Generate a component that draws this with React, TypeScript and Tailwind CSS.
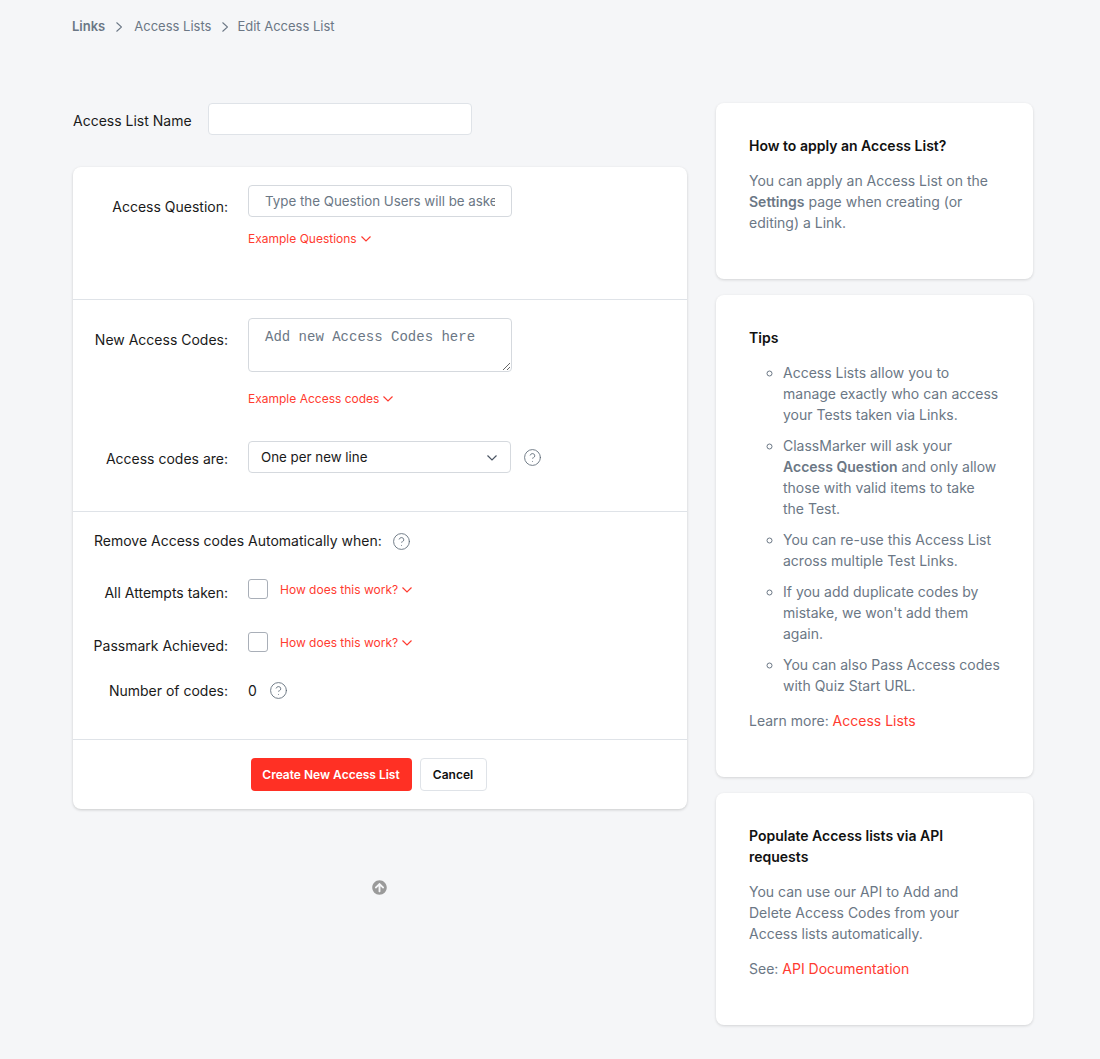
import { CircleHelp } from "lucide-react";
import { FaArrowCircleUp } from "react-icons/fa";

const font = { fontFamily: '"Inter", "Liberation Sans", sans-serif' };

function Chevron({ className }: { className: string }) {
  return (
    <svg width="10" height="6" viewBox="0 0 10 6" fill="none" stroke="currentColor" strokeWidth="1.2" className={className}>
      <path d="M0.5 0.5 L5 5 L9.5 0.5" />
    </svg>
  );
}

function Crumb({ className }: { className: string }) {
  return (
    <svg width="6" height="10" viewBox="0 0 6 10" fill="none" stroke="currentColor" strokeWidth="1.1" className={className}>
      <path d="M0.5 0.5 L5.5 5 L0.5 9.5" />
    </svg>
  );
}

function RedLink({ children }: { children: string }) {
  return (
    <a className="flex items-center gap-[4px] text-[12px] leading-4 text-[#ff3b30]">
      {children}
      <Chevron className="" />
    </a>
  );
}

function Label({ children }: { children: string }) {
  return <label className="block w-[155px] shrink-0 text-right text-[14px] leading-5 text-[#1a1a1a]">{children}</label>;
}

function Help() {
  return <CircleHelp size={19} strokeWidth={1.1} className="text-[#5f6b78]" />;
}

function SideCard({ children, className }: { children: React.ReactNode; className: string }) {
  return (
    <section className={"rounded-lg bg-white pl-[33px] pr-[30px] shadow-[0_1px_3px_rgba(0,0,0,0.14)] text-[14px] leading-[21px] text-[#6b7785] " + className}>
      {children}
    </section>
  );
}

export default function App() {
  return (
    <div style={font} className="min-h-[1059px] bg-[#f5f6f8] pl-[73px] pr-[67px]">
      <nav className="flex h-[53px] items-center text-[13px] text-[#6b7785]">
        <span className="font-semibold -ml-px">Links</span>
        <Crumb className="ml-[11px] mr-[12px]" />
        <span>Access Lists</span>
        <Crumb className="ml-[11px] mr-[9px]" />
        <span>Edit Access List</span>
      </nav>

      <div className="mt-[50px] flex gap-[29px]">
        <main className="w-[614px] shrink-0">
          <div className="flex items-center">
            <label className="w-[135px] shrink-0 text-[14px] text-[#1a1a1a] pt-[3px]">Access List Name</label>
            <input className="h-[32px] w-[264px] rounded border border-[#dfe3e8] bg-white" />
          </div>

          <div className="mt-[32px] h-[642px] rounded-lg bg-white shadow-[0_1px_3px_rgba(0,0,0,0.18)]">
            <div className="h-[133px] border-b border-[#dfe3e8] pt-[18px]">
              <div className="flex">
                <div className="pt-[12px]"><Label>Access Question:</Label></div>
                <div className="ml-5">
                  <input
                    placeholder="Type the Question Users will be asked"
                    className="h-[32px] w-[264px] rounded border border-[#d5d9de] bg-white px-4 text-[13.333px] placeholder:text-[#6b7785]"
                  />
                  <div className="mt-[14px]"><RedLink>Example Questions</RedLink></div>
                </div>
              </div>
            </div>

            <div className="h-[212px] border-b border-[#dfe3e8] pt-[18px]">
              <div className="flex">
                <div className="pt-[12px]"><Label>New Access Codes:</Label></div>
                <div className="ml-5">
                  <textarea
                    placeholder="Add new Access Codes here"
                    style={{ fontFamily: '"Liberation Mono", monospace' }}
                    className="block h-[54px] w-[264px] rounded border border-[#d5d9de] bg-white px-4 py-[8px] text-[14px] leading-5 placeholder:text-[#6b7785]"
                  />
                  <div className="mt-[19px]"><RedLink>Example Access codes</RedLink></div>
                </div>
              </div>
              <div className="mt-[34px] flex items-center">
                <div className="pt-[4px]"><Label>Access codes are:</Label></div>
                <div className="ml-5 flex h-[32px] w-[263px] items-center justify-between rounded border border-[#d5d9de] bg-white pl-[12px] pr-[13px] pt-px text-[13.333px] text-[#1a1a1a]">
                  One per new line
                  <Chevron className="text-[#4b5563]" />
                </div>
                <div className="ml-[12px]"><Help /></div>
              </div>
            </div>

            <div className="h-[228px] border-b border-[#dfe3e8] pt-[19px]">
              <div className="flex items-center pl-[21px] text-[14px] leading-5 text-[#1a1a1a]">
                Remove Access codes Automatically when:
                <span className="ml-[10px]"><Help /></span>
              </div>
              <div className="mt-[28px] flex">
                <div className="pt-[4px]"><Label>All Attempts taken:</Label></div>
                <input type="checkbox" className="ml-5 h-5 w-5 appearance-none rounded-[3px] border border-[#a9afb8] bg-white" />
                <div className="ml-3 pt-[3px]"><RedLink>How does this work?</RedLink></div>
              </div>
              <div className="mt-[29px] flex">
                <div className="pt-[4px]"><Label>Passmark Achieved:</Label></div>
                <input type="checkbox" className="ml-5 h-5 w-5 appearance-none rounded-[3px] border border-[#a9afb8] bg-white" />
                <div className="ml-3 pt-[3px]"><RedLink>How does this work?</RedLink></div>
              </div>
              <div className="mt-[24px] flex items-center">
                <Label>Number of codes:</Label>
                <span className="ml-5 text-[14px] text-[#1a1a1a]">0</span>
                <span className="ml-[12px]"><Help /></span>
              </div>
            </div>

            <div className="flex justify-center gap-2 pt-[18px] pr-[23px]">
              <button className="h-[33px] w-[161px] rounded bg-[#ff3024] text-[12px] font-semibold text-white">Create New Access List</button>
              <button className="h-[33px] w-[67px] rounded border border-[#dfe3e8] bg-white text-[12px] font-semibold text-[#111]">Cancel</button>
            </div>
          </div>

          <div className="mt-[71px] flex justify-center pr-[2px]">
            <FaArrowCircleUp size={15} className="text-[#9a9a9a]" />
          </div>
        </main>

        <aside className="flex w-[317px] shrink-0 flex-col gap-4">
          <SideCard className="h-[176px] pt-[32px]">
            <h3 className="font-semibold text-[#111]">How to apply an Access List?</h3>
            <p className="mt-[14px]">You can apply an Access List on the <b className="font-semibold">Settings</b> page when creating (or editing) a Link.</p>
          </SideCard>
          <SideCard className="h-[482px] pt-[32px]">
            <h3 className="font-semibold text-[#111]">Tips</h3>
            <ul className="mt-[14px] flex list-[circle] flex-col gap-[10px] pl-[34px]">
              <li>Access Lists allow you to manage exactly who can access your Tests taken via Links.</li>
              <li>ClassMarker will ask your <b className="font-semibold">Access Question</b> and only allow those with valid items to take<br />the Test.</li>
              <li>You can re-use this Access List across multiple Test Links.</li>
              <li>If you add duplicate codes by mistake, we won't add them again.</li>
              <li>You can also Pass Access codes with Quiz Start URL.</li>
            </ul>
            <p className="mt-[14px]">Learn more: <a className="text-[#ff3b30]">Access Lists</a></p>
          </SideCard>
          <SideCard className="h-[232px] pt-[32px]">
            <h3 className="font-semibold text-[#111]">Populate Access lists via API requests</h3>
            <p className="mt-[14px]">You can use our API to Add and Delete Access Codes from your Access lists automatically.</p>
            <p className="mt-[14px]">See: <a className="text-[#ff3b30]">API Documentation</a></p>
          </SideCard>
        </aside>
      </div>
    </div>
  );
}
